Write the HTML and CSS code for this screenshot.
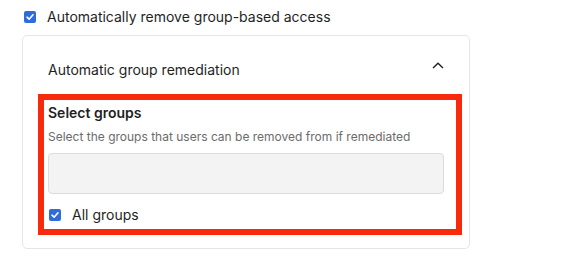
FILE: index.html
```html
<!DOCTYPE html>
<html>
<head>
<meta charset="utf-8">
<link rel="stylesheet" href="styles.css">
</head>
<body>
<div class="page">
  <label class="check-row top-row">
    <span class="box"><svg viewBox="0 0 12 12" width="12" height="12"><path d="M3 6.2 L5.1 8.2 L9 3.8" fill="none" stroke="#fff" stroke-width="1.6" stroke-linecap="round" stroke-linejoin="round"/></svg></span>
    <span class="label">Automatically remove group-based access</span>
  </label>
  <div class="card">
    <div class="card-head">
      <span class="card-title">Automatic group remediation</span>
      <svg class="chev" viewBox="0 0 12 7" width="12" height="7"><path d="M1 6 L6 1.2 L11 6" fill="none" stroke="#222" stroke-width="1.4"/></svg>
    </div>
    <div class="highlight">
      <div class="field-title">Select groups</div>
      <div class="field-desc">Select the groups that users can be removed from if remediated</div>
      <div class="input"></div>
      <label class="check-row all-row">
        <span class="box"><svg viewBox="0 0 12 12" width="12" height="12"><path d="M3 6.2 L5.1 8.2 L9 3.8" fill="none" stroke="#fff" stroke-width="1.6" stroke-linecap="round" stroke-linejoin="round"/></svg></span>
        <span class="label">All groups</span>
      </label>
    </div>
  </div>
</div>
</body>
</html>
```
FILE: styles.css
```css
html, body {
  margin: 0;
  padding: 0;
  background: #fff;
}
body {
  font-family: Inter, "Noto Sans", sans-serif;
  color: #1f1f1f;
  width: 565px;
  height: 260px;
  overflow: hidden;
}
.page {
  padding: 7px 0 0 24px;
}
.check-row {
  display: flex;
  align-items: center;
  gap: 11px;
}
.box {
  width: 12px;
  height: 12px;
  border-radius: 2px;
  background: #2e6bdc;
  display: flex;
  flex: none;
}
.label {
  font-size: 14px;
  line-height: 20px;
}
.card {
  margin: 8px 0 0 -2px;
  width: 448px;
  border: 1px solid #e6e6e6;
  border-radius: 5px;
  padding: 0 25px 16px 25px;
  box-sizing: border-box;
  height: 214px;
}
.card-head {
  display: flex;
  align-items: center;
  justify-content: space-between;
  padding: 24px 0 0 0;
  height: 20px;
}
.card-title {
  font-size: 14px;
  line-height: 20px;
}
.chev {
  margin-top: -9px;
}
.highlight {
  margin: 14px -18px 0 -10px;
  border: 6px solid #f72b0c;
  padding: 3px 12px 0 4px;
  height: 126px;
}
.field-title {
  font-size: 14px;
  font-weight: 600;
  line-height: 20px;
}
.field-desc {
  margin-top: 5px;
  font-size: 12px;
  line-height: 18px;
  color: #6b6b6b;
}
.input {
  margin-top: 7px;
  height: 39px;
  border: 1px solid #dcdcdc;
  border-radius: 4px;
  background: #f3f3f3;
}
.all-row {
  margin-top: 11px;
  padding-left: 1px;
}
```
